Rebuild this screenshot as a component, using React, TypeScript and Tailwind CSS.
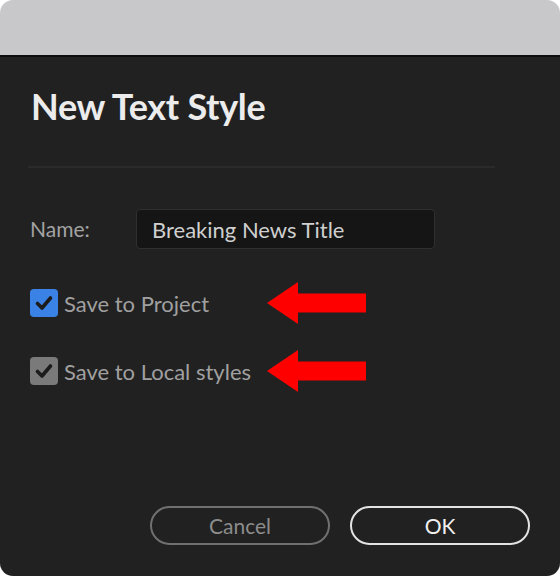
import React from "react";

function Check({ color }: { color: string }) {
  return (
    <div className={`w-[28px] h-[28px] rounded-[4px] flex items-center justify-center ${color}`}>
      <svg width="20" height="20" viewBox="0 0 20 20" fill="none">
        <path d="M3.5 10.5 L8 15 L16.5 5" stroke="#1c1c1c" strokeWidth="3.6" strokeLinecap="round" strokeLinejoin="round" />
      </svg>
    </div>
  );
}

function Arrow() {
  return (
    <svg width="100" height="42" viewBox="0 0 100 42">
      <polygon points="0,21 31,0 31,11.5 99,11.5 99,30.5 31,30.5 31,42" fill="#ff0000" />
    </svg>
  );
}

export default function App() {
  return (
    <div className="w-[560px] h-[576px] bg-white" style={{ fontFamily: "Lato, 'Noto Sans', sans-serif" }}>
      <div className="w-[560px] h-[576px] rounded-[13px] overflow-hidden flex flex-col">
        <div className="h-[57px] bg-[#c8c8ca] border-b-2 border-[#0e0e0e] shrink-0" />
        <div className="flex-1 bg-[#212121] flex flex-col px-[30px]">
          <h1 className="mt-[27px] ml-[1px] text-[36px] leading-[44px] font-bold text-[#ececec] tracking-[-0.3px]">
            New Text Style
          </h1>
          <div className="mt-[38px] h-[2px] bg-[#2a2a2a] w-[467px] -ml-[2px]" />
          <div className="mt-[41px] flex items-center h-[40px]">
            <span className="w-[106px] text-[21px] text-[#a3a3a3]">Name:</span>
            <div className="w-[299px] h-[40px] rounded-[4px] bg-[#151515] border border-[#2f2f2f] flex items-center px-[15px]">
              <span className="text-[22px] text-[#cfcfcf]">Breaking News Title</span>
            </div>
          </div>
          <div className="mt-[40px] flex items-center h-[28px]">
            <Check color="bg-[#3b82e6]" />
            <span className="ml-[6px] w-[203px] text-[22px] text-[#a0a0a0]">Save to Project</span>
            <Arrow />
          </div>
          <div className="mt-[40px] flex items-center h-[28px]">
            <Check color="bg-[#7a7a7a]" />
            <span className="ml-[6px] w-[203px] text-[22px] text-[#a0a0a0]">Save to Local styles</span>
            <Arrow />
          </div>
          <div className="mt-auto mb-[31px] flex justify-end gap-[20px]">
            <button className="w-[180px] h-[39px] rounded-full border-2 border-[#707070] text-[21px] text-[#8c8c8c] flex items-center justify-center">
              Cancel
            </button>
            <button className="w-[180px] h-[39px] rounded-full border-2 border-[#e3e3e3] text-[21px] text-[#f0f0f0] flex items-center justify-center">
              OK
            </button>
          </div>
        </div>
      </div>
    </div>
  );
}
